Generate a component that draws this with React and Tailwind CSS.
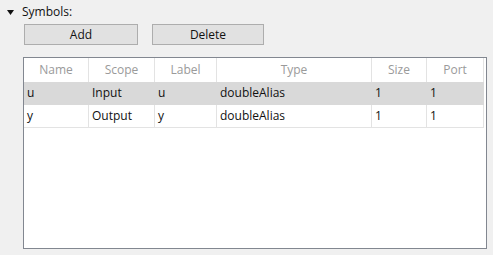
import React from 'react';

const columns = [
  { key: 'name', label: 'Name', width: 'w-[65px]' },
  { key: 'scope', label: 'Scope', width: 'w-[66px]' },
  { key: 'label', label: 'Label', width: 'w-[62px]' },
  { key: 'type', label: 'Type', width: 'w-[155px]' },
  { key: 'size', label: 'Size', width: 'w-[55px]' },
  { key: 'port', label: 'Port', width: 'w-[57px]' },
];

const symbols = [
  { name: 'u', scope: 'Input', label: 'u', type: 'doubleAlias', size: '1', port: '1' },
  { name: 'y', scope: 'Output', label: 'y', type: 'doubleAlias', size: '1', port: '1' },
];

function Button({ children, width }) {
  return (
    <button
      className={`${width} h-[21px] border border-[#adadad] bg-[#e1e1e1] text-[12px] text-[#111] leading-none`}
    >
      {children}
    </button>
  );
}

export default function App() {
  // first row shows as selected
  const selected = 0;

  return (
    <div
      className="w-[493px] h-[255px] bg-[#f0f0f0] text-[12px] text-[#111] overflow-hidden"
      style={{ fontFamily: '"Open Sans", "Noto Sans", sans-serif' }}
    >
      {/* Section header */}
      <div className="flex items-center h-[22px] pl-[7px] pt-[1px]">
        <svg width="7" height="5" viewBox="0 0 7 5" className="mt-[1px]">
          <path d="M0 0H7L3.5 5Z" fill="#111" />
        </svg>
        <span className="ml-[8px]">Symbols:</span>
      </div>

      {/* Add / Delete */}
      <div className="flex gap-[14px] pl-[24px] mt-[2px]">
        <Button width="w-[114px]">Add</Button>
        <Button width="w-[112px]">Delete</Button>
      </div>

      {/* Symbols table */}
      <div className="ml-[23px] mt-[12px] w-[464px] h-[192px] border border-[#828790] bg-white">
        <div className="flex h-[24px] w-[460px]">
          {columns.map((c) => (
            <div
              key={c.key}
              className={`${c.width} flex items-center justify-center border-r border-[#e3e3e3] text-[#9a9a9a]`}
            >
              {c.label}
            </div>
          ))}
        </div>
        {symbols.map((row, i) => (
          <div
            key={row.name}
            className={`flex w-[460px] h-[23px] border-b ${
              i === selected ? 'bg-[#d9d9d9] border-[#d9d9d9]' : 'bg-white border-[#e3e3e3]'
            }`}
          >
            {columns.map((c) => (
              <div
                key={c.key}
                className={`${c.width} flex items-center px-[3px] border-r ${
                  i === selected ? 'border-[#d9d9d9]' : 'border-[#e3e3e3]'
                }`}
              >
                {row[c.key]}
              </div>
            ))}
          </div>
        ))}
      </div>
    </div>
  );
}
